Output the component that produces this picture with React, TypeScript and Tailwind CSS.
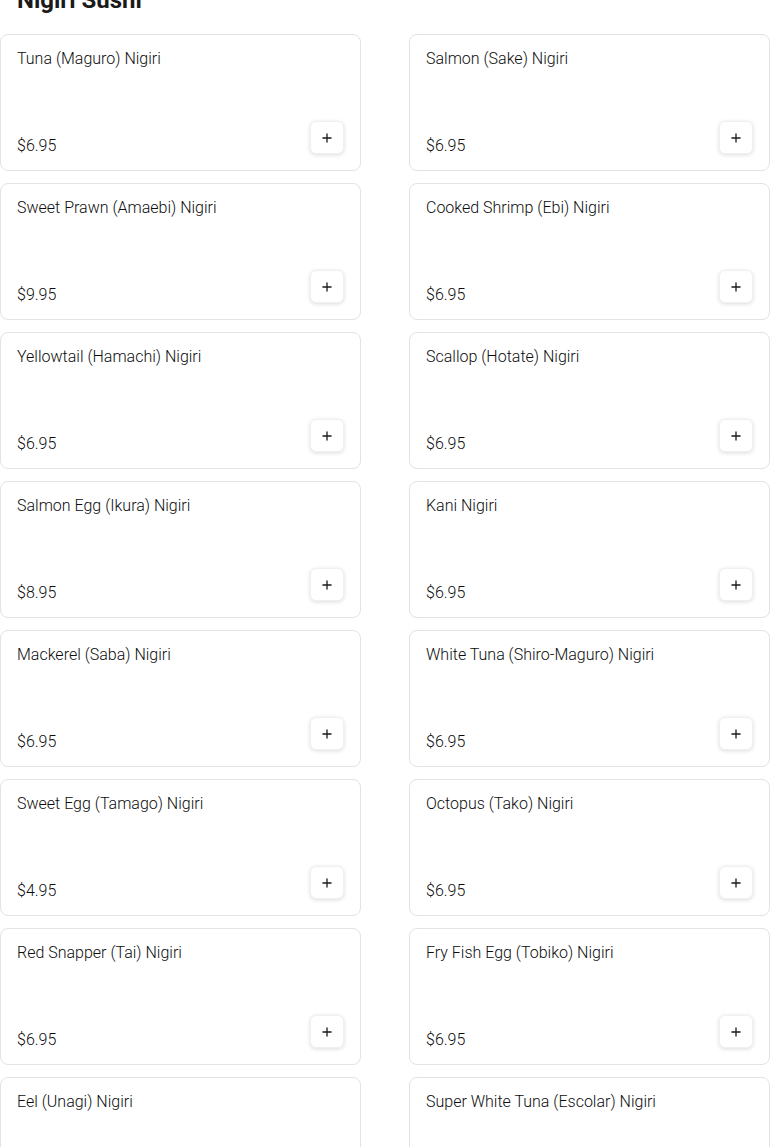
import { Plus } from "lucide-react";

interface MenuItem {
  name: string;
  price: string;
}

const items: MenuItem[] = [
  { name: "Tuna (Maguro) Nigiri", price: "$6.95" },
  { name: "Salmon (Sake) Nigiri", price: "$6.95" },
  { name: "Sweet Prawn (Amaebi) Nigiri", price: "$9.95" },
  { name: "Cooked Shrimp (Ebi) Nigiri", price: "$6.95" },
  { name: "Yellowtail (Hamachi) Nigiri", price: "$6.95" },
  { name: "Scallop (Hotate) Nigiri", price: "$6.95" },
  { name: "Salmon Egg (Ikura) Nigiri", price: "$8.95" },
  { name: "Kani Nigiri", price: "$6.95" },
  { name: "Mackerel (Saba) Nigiri", price: "$6.95" },
  { name: "White Tuna (Shiro-Maguro) Nigiri", price: "$6.95" },
  { name: "Sweet Egg (Tamago) Nigiri", price: "$4.95" },
  { name: "Octopus (Tako) Nigiri", price: "$6.95" },
  { name: "Red Snapper (Tai) Nigiri", price: "$6.95" },
  { name: "Fry Fish Egg (Tobiko) Nigiri", price: "$6.95" },
  { name: "Eel (Unagi) Nigiri", price: "$6.95" },
  { name: "Super White Tuna (Escolar) Nigiri", price: "$6.95" },
];

function ItemCard({ item }: { item: MenuItem }) {
  return (
    <div className="flex h-[137px] flex-col justify-between rounded-lg border border-[#e3e3e3] bg-white p-4">
      <div className="-mt-1 text-base leading-6 font-light text-[#0d0d0d]">{item.name}</div>
      <div className="flex items-end justify-between">
        <span className="-mb-0.5 text-base leading-5 font-light text-[#0d0d0d]">{item.price}</span>
        <button className="flex h-[33px] w-[34px] items-center justify-center rounded-md border border-[#f0f0f0] bg-white text-[#1a1a1a] shadow-[0_1px_4px_rgba(0,0,0,0.14)]">
          <Plus className="size-3.5" strokeWidth={2.25} />
        </button>
      </div>
    </div>
  );
}

export default function App() {
  return (
    <div className="min-h-screen overflow-hidden bg-white font-['Roboto',sans-serif]">
      <h2 className="mt-[-16px] mb-[18px] px-[17px] text-2xl leading-8 font-bold text-[#1a1a1a]">Nigiri Sushi</h2>
      <div className="grid grid-cols-2 gap-x-12 gap-y-3">
        {items.map((item) => (
          <ItemCard key={item.name} item={item} />
        ))}
      </div>
    </div>
  );
}
